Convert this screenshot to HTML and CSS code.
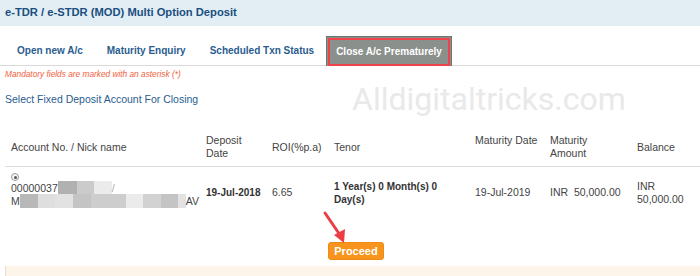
FILE: index.html
```html
<!DOCTYPE html>
<html>
<head>
<meta charset="utf-8">
<link rel="stylesheet" href="styles.css">
</head>
<body>
<div class="page">
  <div class="header">e-TDR / e-STDR (MOD) Multi Option Deposit</div>
  <div class="tabs">
    <div class="tab">Open new A/c</div>
    <div class="tab">Maturity Enquiry</div>
    <div class="tab">Scheduled Txn Status</div>
    <div class="tab active"><span class="inner">Close A/c Prematurely</span></div>
  </div>
  <div class="mandatory">Mandatory fields are marked with an asterisk (*)</div>
  <div class="section">Select Fixed Deposit Account For Closing</div>
  <div class="watermark">Alldigitaltricks.com</div>
  <table class="grid">
    <colgroup>
      <col class="c1"><col class="c2"><col class="c3"><col class="c4"><col class="c5"><col class="c6"><col class="c7">
    </colgroup>
    <thead>
      <tr>
        <th>Account No. / Nick name</th>
        <th>Deposit<br>Date</th>
        <th>ROI(%p.a)</th>
        <th>Tenor</th>
        <th class="top">Maturity Date</th>
        <th>Maturity<br>Amount</th>
        <th>Balance</th>
      </tr>
    </thead>
    <tbody>
      <tr>
        <td class="acct">
          <span class="radio"><span class="dot"></span></span>
          <div class="line">00000037<span class="b w19 s1"></span><span class="b w17 s2"></span><span class="b w18 s3"></span><span class="faint">/</span></div>
          <div class="line">M<span class="b w18 s4"></span><span class="b w17 s5"></span><span class="b w18 s6"></span><span class="b w18 s7"></span><span class="b w35 s8"></span><span class="b w17 s3"></span><span class="b w18 s9"></span><span class="b w17 s7"></span><span class="b w8 s6"></span>AV</div>
        </td>
        <td class="bold nowrap">19-Jul-2018</td>
        <td>6.65</td>
        <td class="bold">1 Year(s) 0 Month(s) 0<br>Day(s)</td>
        <td class="nowrap">19-Jul-2019</td>
        <td class="nowrap">INR&nbsp; 50,000.00</td>
        <td>INR<br>50,000.00</td>
      </tr>
    </tbody>
  </table>
  <div class="actions">
    <button class="proceed">Proceed</button>
  </div>
  <div class="footer-band"></div>
  <svg class="arrow" width="30" height="36" viewBox="0 0 30 36">
    <line x1="3" y1="3" x2="18" y2="25" stroke="#ea3f46" stroke-width="3" stroke-linecap="round"/>
    <polygon points="12,25 22,33 23,19" fill="#ea3f46"/>
  </svg>
</div>
</body>
</html>
```

FILE: styles.css
```css
html, body {
  margin: 0;
  padding: 0;
  background: #ffffff;
}
body {
  font-family: "Liberation Sans", Arial, sans-serif;
  font-size: 10.5px;
  color: #444444;
  width: 700px;
  height: 276px;
  overflow: hidden;
}
.page {
  position: relative;
  width: 700px;
  height: 276px;
}
.header {
  height: 26px;
  line-height: 25px;
  background: #e2eef4;
  color: #1a4e80;
  font-weight: bold;
  font-size: 11.2px;
  padding-left: 5px;
}
.tabs {
  display: flex;
  align-items: flex-end;
  margin-top: 10px;
  height: 29px;
  padding-left: 5px;
  border-bottom: 1px solid #d9d9d9;
}
.tab {
  height: 29px;
  line-height: 29px;
  padding: 0 12px;
  color: #2a5d8f;
  font-weight: bold;
  font-size: 10px;
}
.tab.active {
  margin-left: 0;
  padding: 0;
  background: #8a918d;
  border: 1px solid #707572;
  border-bottom: none;
  height: 30px;
  margin-bottom: -1px;
  box-sizing: border-box;
}
.tab.active .inner {
  display: block;
  margin: 1px 1px 0 1px;
  height: 28px;
  line-height: 24px;
  box-sizing: border-box;
  border: 2px solid #f0424a;
  padding: 0 6px;
  color: #ffffff;
}
.mandatory {
  margin: 3px 0 0 5px;
  font-style: italic;
  font-size: 8.3px;
  color: #f0603c;
  line-height: 10px;
}
.section {
  margin: 13px 0 0 5px;
  color: #2a5d8f;
  font-size: 10.5px;
  line-height: 14px;
}
.watermark {
  position: absolute;
  left: 352px;
  top: 83px;
  font-family: Roboto, sans-serif;
  font-size: 32px;
  line-height: 32px;
  font-weight: 400;
  color: #e9e9e9;
}
.grid {
  margin-top: 23px;
  margin-left: 5px;
  width: 695px;
  border-collapse: collapse;
  table-layout: fixed;
  position: relative;
}
.c1 { width: 195px; }
.c2 { width: 66px; }
.c3 { width: 62px; }
.c4 { width: 141px; }
.c5 { width: 75px; }
.c6 { width: 87px; }
.c7 { width: 69px; }
.grid th {
  font-weight: normal;
  text-align: left;
  padding: 5px 6px 6px 6px;
  height: 26px;
  line-height: 13px;
  vertical-align: middle;
  border-bottom: 1px solid #dddddd;
  color: #444444;
}
.grid th.top {
  vertical-align: top;
}
.grid td {
  padding: 5px 6px;
  vertical-align: middle;
  line-height: 13px;
  color: #444444;
}
.grid td.bold {
  font-weight: bold;
  font-size: 10px;
  color: #333333;
}
.grid td.nowrap {
  white-space: nowrap;
}
.grid td.acct {
  padding: 5px 6px 11px 6px;
}
.acct .radio {
  display: block;
  box-sizing: border-box;
  width: 8px;
  height: 8px;
  border: 1px solid #9a9a9a;
  border-radius: 50%;
  margin: 1px 0 0 0;
  position: relative;
  background: #f6f6f6;
}
.acct .radio .dot {
  position: absolute;
  left: 1.5px;
  top: 1.5px;
  width: 3px;
  height: 3px;
  border-radius: 50%;
  background: #555555;
}
.acct .line {
  height: 13px;
  line-height: 13px;
  white-space: nowrap;
}
.b {
  display: inline-block;
  height: 14px;
  vertical-align: -3px;
}
.w8 { width: 8px; }
.w17 { width: 17px; }
.w18 { width: 18px; }
.w19 { width: 19px; }
.w35 { width: 35px; }
.s1 { background: #b1b1b1; }
.s2 { background: #cbcbcb; }
.s3 { background: #ebebeb; }
.s4 { background: #b8b8b8; }
.s5 { background: #dedede; }
.s6 { background: #e2e2e2; }
.s7 { background: #c4c4c4; }
.s8 { background: #cdcdcd; }
.s9 { background: #d2d2d2; }
.faint { color: #aaaaaa; }
.actions {
  display: flex;
  justify-content: center;
  padding-left: 12px;
  margin-top: 24px;
}
.proceed {
  background: #f7941d;
  color: #ffffff;
  font-family: "Liberation Sans", Arial, sans-serif;
  font-weight: bold;
  font-size: 11px;
  border: 1px solid #f08a10;
  border-radius: 3px;
  width: 56px;
  height: 18px;
  padding: 0;
  line-height: 16px;
}
.footer-band {
  margin: 6px 0 0 5px;
  height: 12px;
  background: #fdf5ea;
  border-left: 1px solid #e6ded2;
}
.arrow {
  position: absolute;
  left: 322px;
  top: 210px;
}
```
